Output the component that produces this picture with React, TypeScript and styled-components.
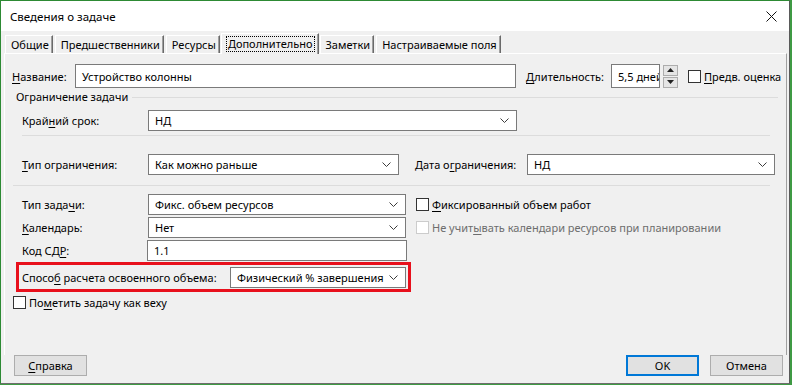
import React from 'react';
import styled, { createGlobalStyle } from 'styled-components';

const GlobalStyle = createGlobalStyle`
  html, body {
    margin: 0;
    padding: 0;
    background: #3f9a44;
  }
  body {
    font-family: 'Noto Sans', 'Liberation Sans', sans-serif;
    font-size: 11px;
    color: #000;
  }
  * {
    box-sizing: border-box;
  }
`;

const Window = styled.div`
  width: 790px;
  height: 384px;
  display: flex;
  flex-direction: column;
  background: #f0f0f0;
  border: 1px solid #2d8a34;
  border-right-color: #5a5a5a;
  border-bottom: 1px solid #6d6d6d;
`;

const TitleBar = styled.div`
  height: 30px;
  display: flex;
  align-items: center;
  justify-content: space-between;
  padding: 0 6px 0 9px;
  background: #fff;
`;

const Title = styled.span`
  font-size: 11.5px;
`;

const CloseButton = styled.div`
  width: 24px;
  height: 24px;
  display: flex;
  align-items: center;
  justify-content: center;
`;

const TabStrip = styled.div`
  height: 22px;
  display: flex;
  align-items: flex-end;
  padding-left: 4px;
`;

const Tab = styled.div<{ $active?: boolean }>`
  position: relative;
  height: ${({ $active }) => ($active ? '21px' : '18px')};
  margin: ${({ $active }) => ($active ? '0 1px -1px -1px' : '0 2px 0 0')};
  padding: ${({ $active }) => ($active ? '0 4px 0 5px' : '0 3px 0 5px')};
  display: flex;
  align-items: center;
  background: #f0f0f0;
  border-left: 1px solid #fff;
  border-top: 1px solid #fff;
  border-right: 1px solid #6a6a6a;
  box-shadow: inset -1px 0 0 #a0a0a0;
  z-index: ${({ $active }) => ($active ? 2 : 1)};
  white-space: nowrap;
`;

const FocusText = styled.span`
  outline: 1px dotted #000;
  outline-offset: 0;
  padding: 0 1px;
  line-height: 14px;
`;

const Panel = styled.div`
  flex: 1;
  margin: 0 2px 0 3px;
  border-top: 1px solid #fff;
  border-left: 1px solid #fff;
  border-right: 1px solid #a0a0a0;
  padding: 10px 8px 0 7px;
  display: flex;
  flex-direction: column;
`;

const Row = styled.div<{ $indent?: number; $top?: number }>`
  display: flex;
  align-items: center;
  margin-left: ${({ $indent }) => $indent ?? 0}px;
  margin-top: ${({ $top }) => $top ?? 0}px;
`;

const Label = styled.span<{ $width?: number; $disabled?: boolean }>`
  width: ${({ $width }) => ($width ? `${$width}px` : 'auto')};
  flex-shrink: 0;
  white-space: nowrap;
  color: ${({ $disabled }) => ($disabled ? '#6d6d6d' : '#000')};
`;

const Key = styled.u`
  text-decoration-thickness: 1px;
  text-underline-offset: 2px;
`;

const TextBox = styled.div<{ $width: number; $height?: number }>`
  width: ${({ $width }) => $width}px;
  height: ${({ $height }) => $height ?? 21}px;
  flex-shrink: 0;
  display: flex;
  align-items: center;
  padding-left: 6px;
  background: #fff;
  border: 1px solid #7a7a7a;
  white-space: nowrap;
  overflow: hidden;
`;

const Combo = styled(TextBox)`
  justify-content: space-between;
  padding-right: 7px;
`;

const Chevron = () => (
  <svg width="9" height="5" viewBox="0 0 9 5">
    <path d="M0.5 0.5 L4.5 4.5 L8.5 0.5" fill="none" stroke="#3c3c3c" strokeWidth="1" />
  </svg>
);

const Spinner = styled.div`
  display: flex;
  flex-direction: column;
  gap: 1px;
  margin-left: 3px;
`;

const SpinButton = styled.div`
  width: 15px;
  height: 11px;
  display: flex;
  align-items: center;
  justify-content: center;
  background: #e5e5e5;
  border: 1px solid #adadad;
`;

const Check = styled.span<{ $disabled?: boolean }>`
  width: 13px;
  height: 13px;
  flex-shrink: 0;
  margin-right: 3px;
  background: #fff;
  border: 1px solid ${({ $disabled }) => ($disabled ? '#cccccc' : '#333')};
`;

const GroupTitle = styled.div`
  display: flex;
  align-items: center;
  height: 17px;
  margin-left: 4px;
  gap: 4px;

  &::after {
    content: '';
    flex: 1;
    height: 1px;
    background: #dcdcdc;
    margin-top: 1px;
  }
`;

const Separator = styled.div<{ $indent: number; $top: number }>`
  height: 1px;
  margin: ${({ $top }) => $top}px 8px 0 ${({ $indent }) => $indent}px;
  background: #dcdcdc;
`;

const Highlight = styled.div`
  width: 395px;
  height: 30px;
  margin: 1px 0 0 4px;
  padding: 0 3px;
  display: flex;
  align-items: center;
  border: 3px solid #e8101c;
`;

const Footer = styled.div`
  height: 28px;
  display: flex;
  align-items: flex-start;
  padding: 0 6px 0 13px;
  gap: 11px;
`;

const Button = styled.div<{ $default?: boolean }>`
  width: 73px;
  height: 21px;
  display: flex;
  align-items: center;
  justify-content: center;
  background: #e1e1e1;
  border: ${({ $default }) => ($default ? '2px solid #0078d7' : '1px solid #adadad')};
`;

const Spacer = styled.div`
  flex: 1;
`;

const App = () => {
  return (
    <>
      <GlobalStyle />
      <Window>
        <TitleBar>
          <Title>Сведения о задаче</Title>
          <CloseButton>
            <svg width="11" height="11" viewBox="0 0 11 11">
              <path d="M0.5 0.5 L10.5 10.5 M10.5 0.5 L0.5 10.5" stroke="#111" strokeWidth="1" />
            </svg>
          </CloseButton>
        </TitleBar>
        <TabStrip>
          <Tab>Общие</Tab>
          <Tab>Предшественники</Tab>
          <Tab>Ресурсы</Tab>
          <Tab $active>
            <FocusText>Дополнительно</FocusText>
          </Tab>
          <Tab>Заметки</Tab>
          <Tab>Настраиваемые поля</Tab>
        </TabStrip>
        <Panel>
          <Row>
            <Label $width={63}>
              <Key>Н</Key>азвание:
            </Label>
            <TextBox $width={441} $height={24}>Устройство колонны</TextBox>
            <Label style={{ marginLeft: 10 }} $width={85}>
              <Key>Д</Key>лительность:
            </Label>
            <TextBox $width={49} $height={24}>5,5 дней</TextBox>
            <Spinner>
              <SpinButton>
                <svg width="7" height="4" viewBox="0 0 7 4">
                  <path d="M0 4 L3.5 0 L7 4 Z" fill="#222" />
                </svg>
              </SpinButton>
              <SpinButton>
                <svg width="7" height="4" viewBox="0 0 7 4">
                  <path d="M0 0 L3.5 4 L7 0 Z" fill="#222" />
                </svg>
              </SpinButton>
            </Spinner>
            <Check style={{ marginLeft: 10 }} />
            <Label>
              <Key>П</Key>редв. оценка
            </Label>
          </Row>
          <GroupTitle>Ограничение задачи</GroupTitle>
          <Row $indent={10} $top={5}>
            <Label $width={126}>
              Край<Key>н</Key>ий срок:
            </Label>
            <Combo $width={369}>
              НД
              <Chevron />
            </Combo>
          </Row>
          <Separator $indent={10} $top={4} />
          <Row $indent={10} $top={18}>
            <Label $width={126}>
              <Key>Т</Key>ип ограничения:
            </Label>
            <Combo $width={251}>
              Как можно раньше
              <Chevron />
            </Combo>
            <Label style={{ marginLeft: 16 }} $width={112}>
              Дата о<Key>г</Key>раничения:
            </Label>
            <Combo $width={248}>
              НД
              <Chevron />
            </Combo>
          </Row>
          <Separator $indent={1} $top={10} />
          <Row $indent={10} $top={8}>
            <Label $width={126}>
              Тип зада<Key>ч</Key>и:
            </Label>
            <Combo $width={258}>
              Фикс. объем ресурсов
              <Chevron />
            </Combo>
            <Check style={{ marginLeft: 10 }} />
            <Label>
              <Key>Ф</Key>иксированный объем работ
            </Label>
          </Row>
          <Row $indent={10} $top={2}>
            <Label $width={126}>
              <Key>К</Key>алендарь:
            </Label>
            <Combo $width={258}>
              Нет
              <Chevron />
            </Combo>
            <Check style={{ marginLeft: 10 }} $disabled />
            <Label $disabled>
              Не учит<Key>ы</Key>вать календари ресурсов при планировании
            </Label>
          </Row>
          <Row $indent={10} $top={2}>
            <Label $width={125}>
              Код СД<Key>Р</Key>:
            </Label>
            <TextBox $width={260}>1.1</TextBox>
          </Row>
          <Highlight>
            <Label $width={208}>
              Спосо<Key>б</Key> расчета освоенного объема:
            </Label>
            <Combo $width={176} $height={21}>
              Физический % завершения
              <Chevron />
            </Combo>
          </Highlight>
          <Row $indent={1} $top={3}>
            <Check />
            <Label>
              По<Key>м</Key>етить задачу как веху
            </Label>
          </Row>
        </Panel>
        <Footer>
          <Button>
            <span>
              <Key>С</Key>правка
            </span>
          </Button>
          <Spacer />
          <Button $default>OK</Button>
          <Button>Отмена</Button>
        </Footer>
      </Window>
    </>
  );
};

export default App;
